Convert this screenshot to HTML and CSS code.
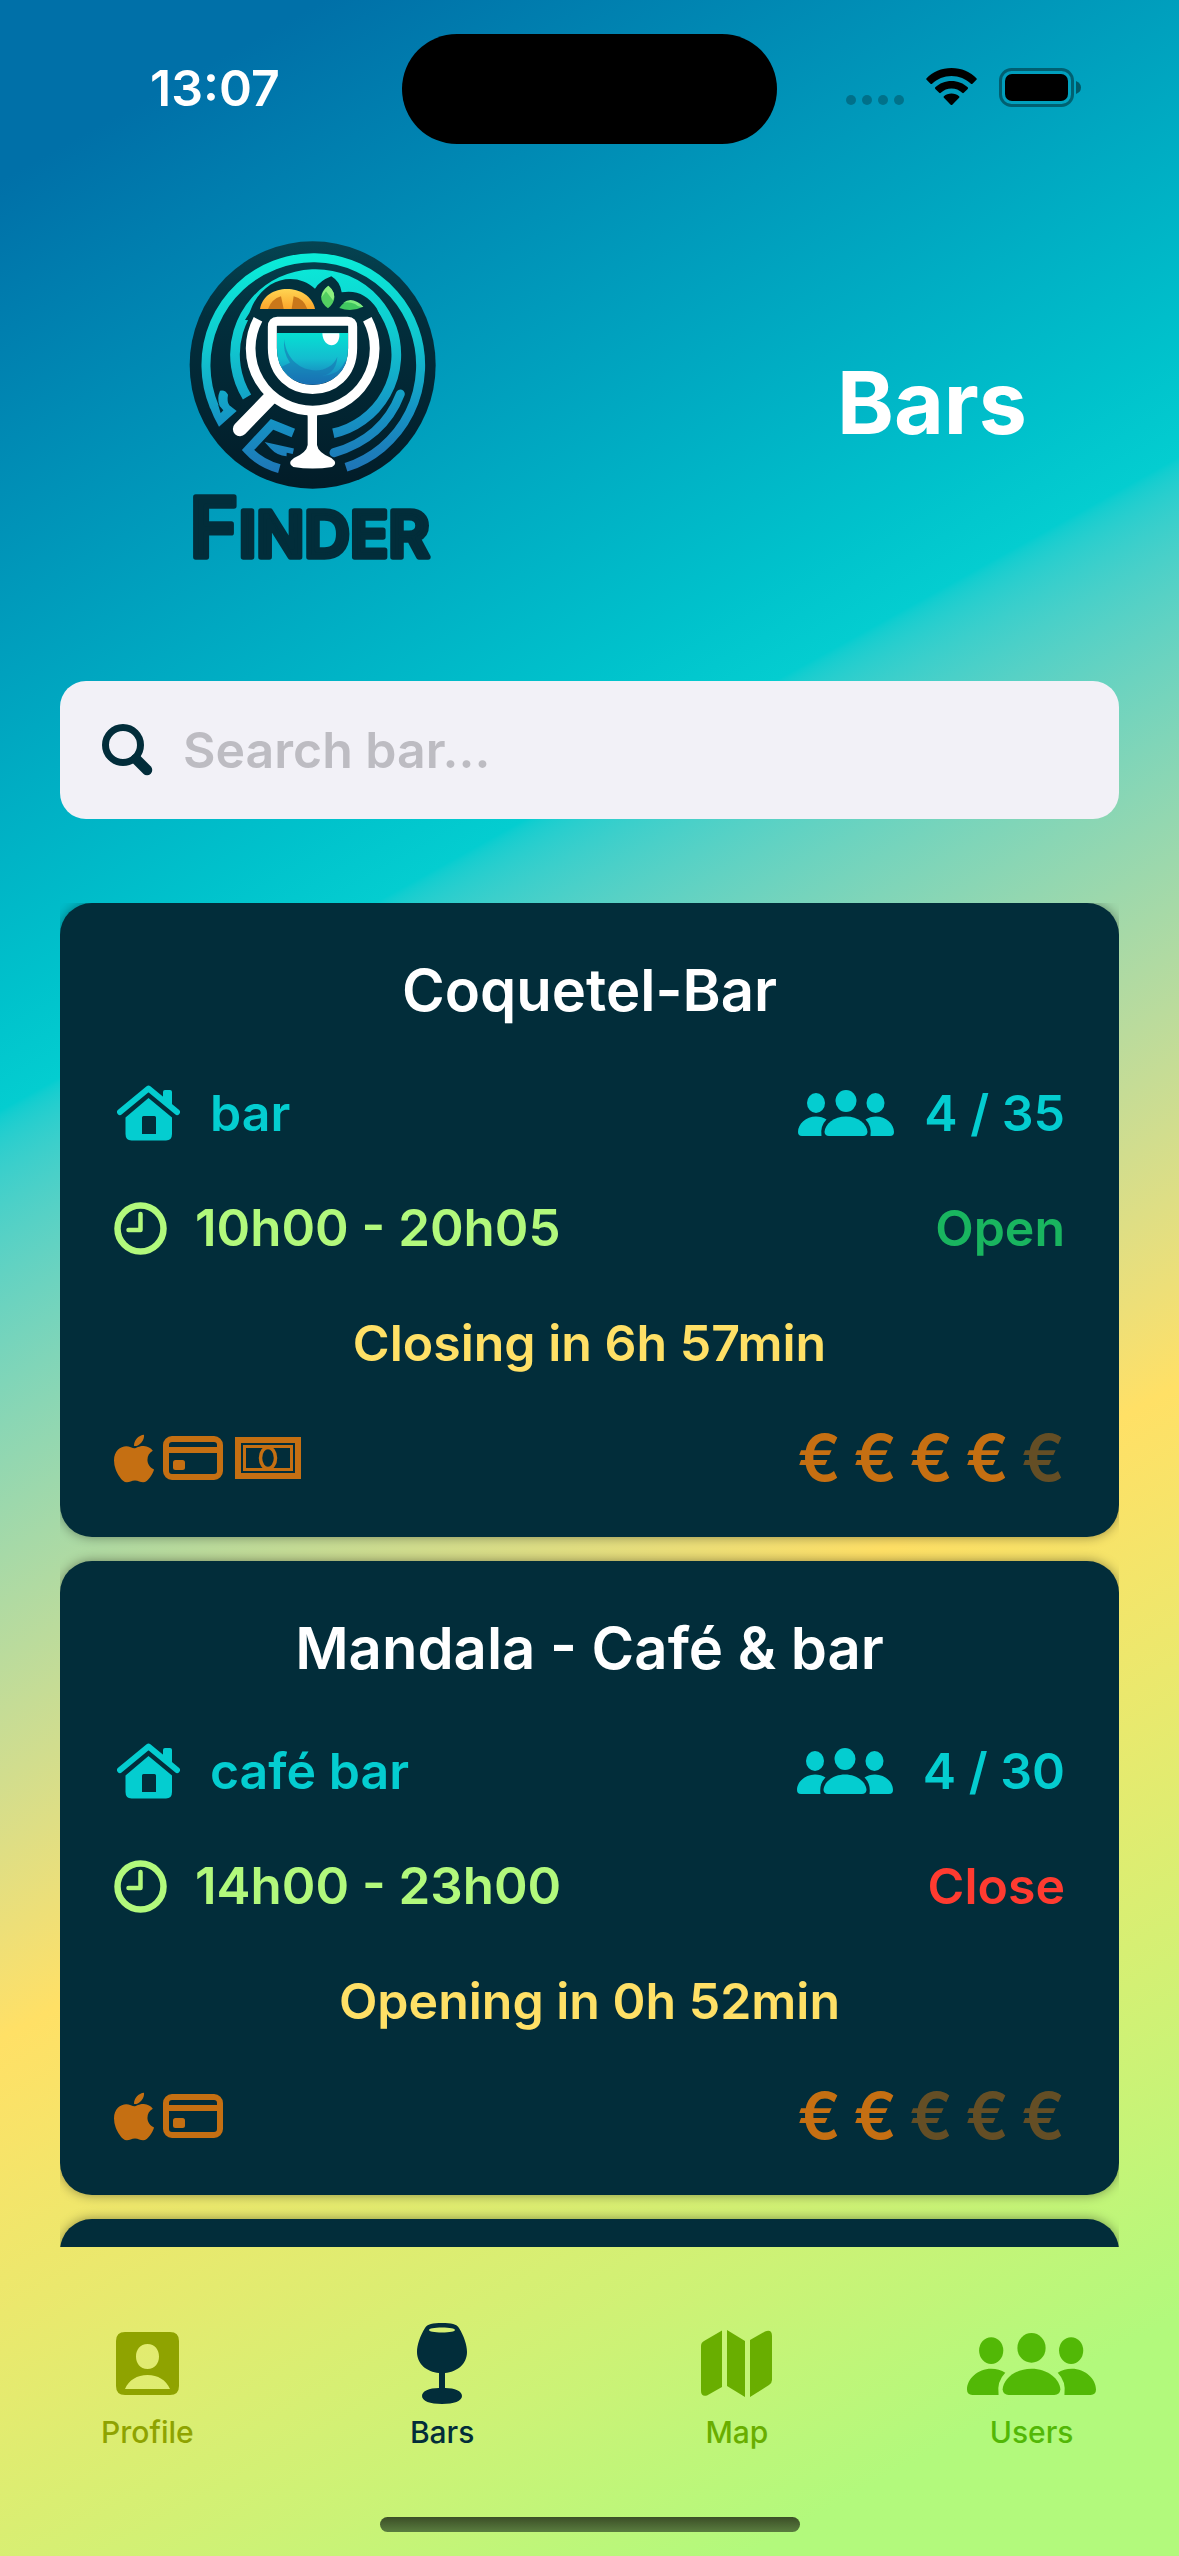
FILE: index.html
```html
<!DOCTYPE html>
<html lang="en">
<head>
<meta charset="utf-8">
<meta name="viewport" content="width=device-width, initial-scale=1">
<title>Finder - Bars</title>
<link rel="stylesheet" href="styles.css">
</head>
<body>
<svg class="sprite" aria-hidden="true">
  <symbol id="house" viewBox="0 0 63 56">
    <path d="M3 27 31.500 3.500 60 27" fill="none" stroke="currentColor" stroke-width="6" stroke-linecap="round" stroke-linejoin="round"/>
    <path d="M46 14V7q0-2 2-2h5q2 0 2 2v15z"/>
    <path fill-rule="evenodd" d="M31.500 13 55 32.500V49q0 6.500-6 6.500H14.500q-6 0-6-6.500V32.500zM26.500 31q-1.500 0-1.500 1.500V49h14V32.500q0-1.500-1.500-1.500z"/>
  </symbol>
  <symbol id="group" viewBox="0 0 96 46">
    <ellipse cx="18" cy="13" rx="9" ry="10"/>
    <ellipse cx="48" cy="11" rx="10.500" ry="11"/>
    <ellipse cx="77.500" cy="13" rx="9" ry="10"/>
    <path d="M23.500 46H4Q0 46 0 42C0 34 8 26.500 18 26.500q6 0 10.500 3Q22 36 23.500 46z"/>
    <path d="M72.500 46H92q4 0 4-4C96 34 88 26.500 78 26.500q-6 0-10.500 3Q74 36 72.500 46z"/>
    <path d="M31 46Q27 46 26.500 42C27 34 36 26.500 48 26.500S69 34 69.500 42Q69 46 65 46z"/>
  </symbol>
  <symbol id="clock" viewBox="0 0 53 53">
    <g fill="none" stroke="currentColor" stroke-linecap="round" stroke-linejoin="round">
      <circle cx="26.500" cy="26.500" r="23" stroke-width="6.500"/>
      <path d="M26.500 12v16H14.500" stroke-width="4.500"/>
    </g>
  </symbol>
  <symbol id="apple" viewBox="4 32 376 448">
    <path d="M318.7 268.7c-.2-36.7 16.4-64.4 50-84.8-18.8-26.9-47.2-41.7-84.700-44.600-35.500-2.800-74.300 20.700-88.500 20.700-15 0-49.400-19.700-76.400-19.700C63.300 141.200 4 184.800 4 273.500q0 39.300 14.400 81.200c12.800 36.700 59 126.700 107.200 125.200 25.200-.6 43-17.900 75.800-17.900 31.800 0 48.300 17.900 76.400 17.900 48.600-.7 90.400-82.500 102.600-119.300-65.200-30.700-61.700-90-61.700-91.900zm-56.600-164.200c27.300-32.400 24.800-61.900 24-72.500-24.100 1.400-52 16.400-67.900 34.900-17.500 19.800-27.800 44.300-25.600 71.900 26.100 2 49.900-11.400 69.500-34.300z"/>
  </symbol>
  <symbol id="card" viewBox="0 0 60 44">
    <rect x="3" y="3" width="54" height="38" rx="6" fill="none" stroke="currentColor" stroke-width="6"/>
    <path d="M3 11h54v6H3z"/>
    <rect x="10" y="24" width="12" height="10" rx="2.500"/>
  </symbol>
  <symbol id="note" viewBox="0 0 66 42">
    <g fill="none" stroke="currentColor">
      <rect x="3" y="3" width="60" height="36" stroke-width="6"/>
      <path d="M9.500 9.500h47v23h-47z" stroke-width="3"/>
      <ellipse cx="33" cy="21" rx="7.500" ry="10.500" stroke-width="3.500"/>
    </g>
  </symbol>
</svg>

<div class="status">
  <time class="status-time">13:07</time>
  <div class="island"></div>
  <div class="status-icons">
    <svg width="58" height="38" viewBox="0 0 58 38" opacity=".25" aria-hidden="true"><circle cx="5" cy="32" r="5"/><circle cx="21" cy="32" r="5"/><circle cx="37" cy="32" r="5"/><circle cx="53" cy="32" r="5"/></svg>
    <svg width="51" height="38" viewBox="0 0 51 38" aria-hidden="true"><path d="M25.500 0C15.500 0 6.500 4 .6 10.200q-.8.800 0 1.600l3.900 3.900q.8.800 1.600 0C11.200 10.900 18 8 25.500 8s14.300 2.900 19.400 7.700q.8.800 1.600 0l3.900-3.900q.8-.8 0-1.600C44.500 4 35.500 0 25.500 0z"/><path d="M25.500 13c-6.300 0-12 2.400-16.200 6.300q-.8.800 0 1.600l3.900 3.900q.8.700 1.600 0a15.500 15.500 0 0 1 21.400 0q.8.700 1.600 0l3.900-3.900q.8-.8 0-1.600C37.500 15.400 31.800 13 25.500 13z"/><path d="M25.500 25.500c-2.900 0-5.600 1-7.600 2.700q-.8.800 0 1.600l6.800 6.900q.8.700 1.600 0l6.800-6.900q.8-.8 0-1.600c-2-1.700-4.700-2.700-7.600-2.700z"/></svg>
    <svg width="82" height="39" viewBox="0 0 82 39" aria-hidden="true"><rect x="1.500" y="1.500" width="72" height="36" rx="11" fill="none" stroke="#000" stroke-opacity=".4" stroke-width="3"/><rect x="6" y="6" width="63" height="27" rx="7"/><path d="M77 13q5 2 5 6.500T77 26z" opacity=".45"/></svg>
  </div>
</div>

<header class="header">
  <svg class="logo" viewBox="0 0 870 1080" role="img" aria-label="Finder">
    <defs>
      <linearGradient id="ring" gradientUnits="userSpaceOnUse" x1="400" y1="96" x2="440" y2="760"><stop offset="0" stop-color="#0aeed9"/><stop offset=".4" stop-color="#10c8cf"/><stop offset=".75" stop-color="#1593c4"/><stop offset="1" stop-color="#1f74b6"/></linearGradient>
      <linearGradient id="dark" x1="0" y1="0" x2="0" y2="1"><stop offset="0" stop-color="#054452"/><stop offset=".3" stop-color="#022f3d"/><stop offset="1" stop-color="#021c28"/></linearGradient>
      <linearGradient id="drink" x1="0" y1="0" x2="0" y2="1"><stop offset="0" stop-color="#06e0d3"/><stop offset=".5" stop-color="#14bccf"/><stop offset="1" stop-color="#1a70b8"/></linearGradient>
      <linearGradient id="citrus" x1="0" y1="0" x2="0" y2="1"><stop offset="0" stop-color="#ffd552"/><stop offset="1" stop-color="#fba52b"/></linearGradient>
    </defs>
    <ellipse cx="428" cy="435" rx="369" ry="371" fill="url(#dark)"/>
    <g fill="none" stroke="url(#ring)">
      <path d="M133 560A322 322 0 1 1 528 742" stroke-width="27"/>
      <path d="M231 531A242 242 0 1 1 490 640" stroke-width="29"/>
      <path d="M691 522Q640 655 492 698" stroke-width="27" stroke-linecap="round"/>
      <path d="M370 639 306 613 234 690Q270 730 328 746" stroke-width="27"/>
      <path d="M370 694 308 680Q325 699 350 700" stroke-width="17"/>
    </g>
    <path d="M119 560Q130 590 147 620L200 573 178 556Q170 545 174 524 166 508 150 512 140 535 149 558L160 571 152 580 143 550z" fill="url(#ring)"/>
    <path d="M235 265Q300 165 428 155T625 265z" fill="url(#ring)"/>
    <path d="M225 300Q240 280 248 255C290 170 380 155 435 206Q450 182 484 169Q510 184 515 217Q580 205 620 265L640 310z" fill="#02303d"/>
    <path d="M270 267C283 187 418 187 435 267z" fill="url(#citrus)"/>
    <path d="M294 267Q305 237 333 229L341 267zM365 267 371 229Q402 237 412 267z" fill="#c9771a"/>
    <path d="M474 265Q432 232 475 197Q512 232 474 265z" fill="#53cf61"/>
    <path d="M455 232Q457 210 475 197 500 217 489 241L468 214z" fill="#8df07f"/>
    <path d="M508 264Q535 222 580 260 545 277 508 264z" fill="#41c860"/>
    <path d="M520 248Q547 228 580 260 566 263 555 252 538 244 520 248z" fill="#7eec80"/>
    <path d="M264 298A186 186 0 1 0 592 298" fill="none" stroke="#fff" stroke-width="29"/>
    <path d="M300 534 210 627" stroke="#fff" stroke-width="43" stroke-linecap="round"/>
    <path d="M322 304H533Q548 304 548 320V384C548 550 307 550 307 384V320Q307 304 322 304z" fill="#02303d" stroke="#fff" stroke-width="27"/>
    <path d="M321 339H534V387C534 530 321 530 321 387z" fill="url(#drink)"/>
    <path d="M343 358C350 460 474 480 502 410 500 450 475 468 448 468 520 465 515 430 530 420 510 510 370 510 335 440L360 428Q337 395 343 358z" fill="#176fae" opacity=".55"/>
    <path d="M457 340H508C512 388 459 388 457 340z" fill="#fff"/>
    <path d="M405 565Q413 576 413 590V675Q410 698 372 714 350 730 370 741 428 750 486 741 506 730 484 714 444 698 441 675V590Q441 576 450 565z" fill="#fff"/>
    <g class="wordmark">
      <text x="59" y="1010" class="wordmark-cap">F</text>
      <text x="206" y="1010" class="wordmark-rest">INDER</text>
    </g>
  </svg>
  <h1 class="title">Bars</h1>
</header>

<form class="search" role="search">
  <label for="q" class="search-icon"><svg width="51" height="52" viewBox="0 0 51 52" role="img" aria-label="Search bar"><circle cx="21" cy="21" r="17.500" fill="none" stroke="currentColor" stroke-width="7"/><path d="m34 35 11 11" stroke="currentColor" stroke-width="10.500" stroke-linecap="round"/></svg></label>
  <input id="q" type="search" class="search-input" placeholder="Search bar...">
</form>

<main class="list">
  <article class="bar">
    <h2 class="bar-name">Coquetel-Bar</h2>
    <div class="row teal"><span class="pair wide"><svg class="i-house"><use href="#house"/></svg>bar</span><span class="pair wide"><svg class="i-group"><use href="#group"/></svg>4 / 35</span></div>
    <div class="row"><span class="pair lime"><svg class="i-clock"><use href="#clock"/></svg>10h00 - 20h05</span><span class="open">Open</span></div>
    <p class="row notice">Closing in 6h 57min</p>
    <div class="row orange"><span class="pay"><svg class="i-apple"><use href="#apple"/></svg><svg class="i-card"><use href="#card"/></svg><svg class="i-note"><use href="#note"/></svg></span><span class="price"><span>€</span><span>€</span><span>€</span><span>€</span><span class="off">€</span></span></div>
  </article>
  <article class="bar">
    <h2 class="bar-name">Mandala - Café &amp; bar</h2>
    <div class="row teal"><span class="pair wide"><svg class="i-house"><use href="#house"/></svg>café bar</span><span class="pair wide"><svg class="i-group"><use href="#group"/></svg>4 / 30</span></div>
    <div class="row"><span class="pair lime"><svg class="i-clock"><use href="#clock"/></svg>14h00 - 23h00</span><span class="closed">Close</span></div>
    <p class="row notice">Opening in 0h 52min</p>
    <div class="row orange"><span class="pay"><svg class="i-apple"><use href="#apple"/></svg><svg class="i-card"><use href="#card"/></svg></span><span class="price"><span>€</span><span>€</span><span class="off">€</span><span class="off">€</span><span class="off">€</span></span></div>
  </article>
  <article class="bar"></article>
</main>

<nav class="tabs">
  <a href="#profile" class="tab tab-profile"><span class="tab-icon"><svg width="63" height="63" viewBox="0 0 63 63"><path fill-rule="evenodd" d="M9 0H54Q63 0 63 9V54Q63 63 54 63H9Q0 63 0 54V9Q0 0 9 0zM31.500 12C24 12 20 18 20 24.500S24 37 31.500 37 43 31 43 24.500 39 12 31.500 12zM9 57H54C50 48 42 43 31.500 43S13 48 9 57z"/></svg></span>Profile</a>
  <a href="#bars" class="tab tab-bars" aria-current="page"><span class="tab-icon"><svg width="50" height="81" viewBox="0 0 50 81"><path fill-rule="evenodd" d="M25 0C34 0 40 1 42 5 47 13 50 22 50 29 50 41 40 49 28 50V65C38 65 45 68 45 73S37 81 25 81 5 78 5 73 12 65 22 65V50C10 49 0 41 0 29 0 22 3 13 8 5 10 1 16 0 25 0zM25 4.500C17 4.500 12 5.500 12 7S17 9.500 25 9.500 38 8.500 38 7 33 4.500 25 4.500z"/></svg></span>Bars</a>
  <a href="#map" class="tab tab-map"><span class="tab-icon"><svg width="71" height="67" viewBox="0 0 71 67"><path d="M21 .5V57L6 65.500Q0 67 0 61V16Q0 12.500 3 11zM26 0 44 11V67L26 56zM49 10 64 1.500Q71-1 71 6V50Q71 53 68 55L49 67z"/></svg></span>Map</a>
  <a href="#users" class="tab tab-users"><span class="tab-icon"><svg width="129" height="62"><use href="#group"/></svg></span>Users</a>
</nav>
<div class="home-indicator"></div>
</body>
</html>
```
FILE: styles.css
```css
* { box-sizing: border-box; }

body {
  margin: 0;
  height: 100vh;
  display: flex;
  flex-direction: column;
  font-family: Inter, "Liberation Sans", sans-serif;
  font-weight: 600;
  font-size: 50px;
  line-height: 60px;
  background: linear-gradient(151deg in oklab, #0070a8 5.6%, #04cdd0 34.6%, #ffe066 63.5%, #b2f97c 92.5%);
}

h1, h2, p { margin: 0; }
svg { display: block; fill: currentColor; flex: none; }
.sprite { position: absolute; width: 0; height: 0; }

/* Status bar */
.status {
  display: grid;
  grid-template-columns: 1fr 375px 1fr;
  padding-top: 34px;
}
.status-time { color: #fff; padding: 24px 0 0 150px; }
.island { height: 110px; border-radius: 55px; background: #000; }
.status-icons {
  display: flex;
  gap: 22px;
  padding: 34px 98px 0 0;
  justify-content: flex-end;
}

/* Header */
.header {
  display: flex;
  justify-content: space-between;
  align-items: center;
  padding: 76px 152px 0 170px;
}
.logo { width: 290px; height: 360px; }
.title { color: #fff; font-size: 86px; line-height: 100px; font-weight: 700; padding-top: 6px; }
.wordmark {
  font-weight: 600;
  fill: #022d3a;
  stroke: #022d3a;
  stroke-width: 16px;
  stroke-linejoin: round;
}
.wordmark-cap { font-size: 246px; }
.wordmark-rest { font-size: 190px; }

/* Search */
.search {
  display: flex;
  align-items: center;
  gap: 30px;
  height: 138px;
  margin: 101px 60px 84px;
  padding: 0 42px;
  border-radius: 26px;
  background: #f2f1f7;
  color: #022d3a;
}
.search-icon { flex: none; }
.search-input {
  flex: 1;
  min-width: 0;
  padding: 0;
  border: 0;
  outline: 0;
  background: none;
  color: inherit;
  font: inherit;
}
.search-input::placeholder { color: #bdbcc2; opacity: 1; }

/* Bar list */
.list {
  flex: 1 1 0;
  min-height: 0;
  overflow: hidden;
  display: flex;
  flex-direction: column;
  gap: 24px;
  margin: 0 60px;
}
.bar {
  flex: none;
  display: flex;
  flex-direction: column;
  gap: 55px;
  padding: 49px 54px;
  border-radius: 32px;
  background: #022d3a;
  box-shadow: 0 0 12px rgba(0, 0, 0, .4);
}
.bar-name {
  color: #fff;
  font-size: 58px;
  line-height: 76px;
  font-weight: 600;
  text-align: center;
}
.row {
  display: flex;
  justify-content: space-between;
  align-items: center;
  height: 60px;
}
.pair { display: flex; align-items: center; gap: 28px; }
.wide { gap: 30px; }
.teal { color: #04cdd0; }
.lime { color: #b2f97c; font-size: 51px; }
.open { color: #19b55f; }
.closed { color: #ff3b30; }
.notice { justify-content: center; color: #ffe066; }
.orange { color: #c56f12; }
.pay { display: flex; align-items: center; gap: 9px; }
.price { display: flex; font-size: 64px; }
.price span { width: 56px; text-align: right; }
.off { opacity: .5; }
.i-house { width: 63px; height: 56px; margin-left: 3px; }
.i-group { width: 96px; height: 46px; }
.i-clock { width: 53px; height: 53px; }
.i-apple { width: 40px; height: 49px; }
.i-card { width: 60px; height: 44px; }
.i-note { width: 66px; height: 42px; margin-left: 3px; }

/* Tab bar */
.tabs {
  display: grid;
  grid-template-columns: repeat(4, 1fr);
  padding: 76px 0 64px;
}
.tab {
  display: flex;
  flex-direction: column;
  align-items: center;
  gap: 10px;
  font-size: 30px;
  line-height: 36px;
  font-weight: 500;
  text-decoration: none;
}
.tab-icon { height: 81px; display: flex; align-items: center; }
.tab-profile { color: #8fa300; }
.tab-bars { color: #022d3a; }
.tab-map { color: #69ae00; }
.tab-users { color: #52b806; }

.home-indicator {
  align-self: center;
  width: 420px;
  height: 15px;
  margin: 3px 0 24px;
  border-radius: 8px;
  background: linear-gradient(#3b4e27, #5a7d3f);
}
```
